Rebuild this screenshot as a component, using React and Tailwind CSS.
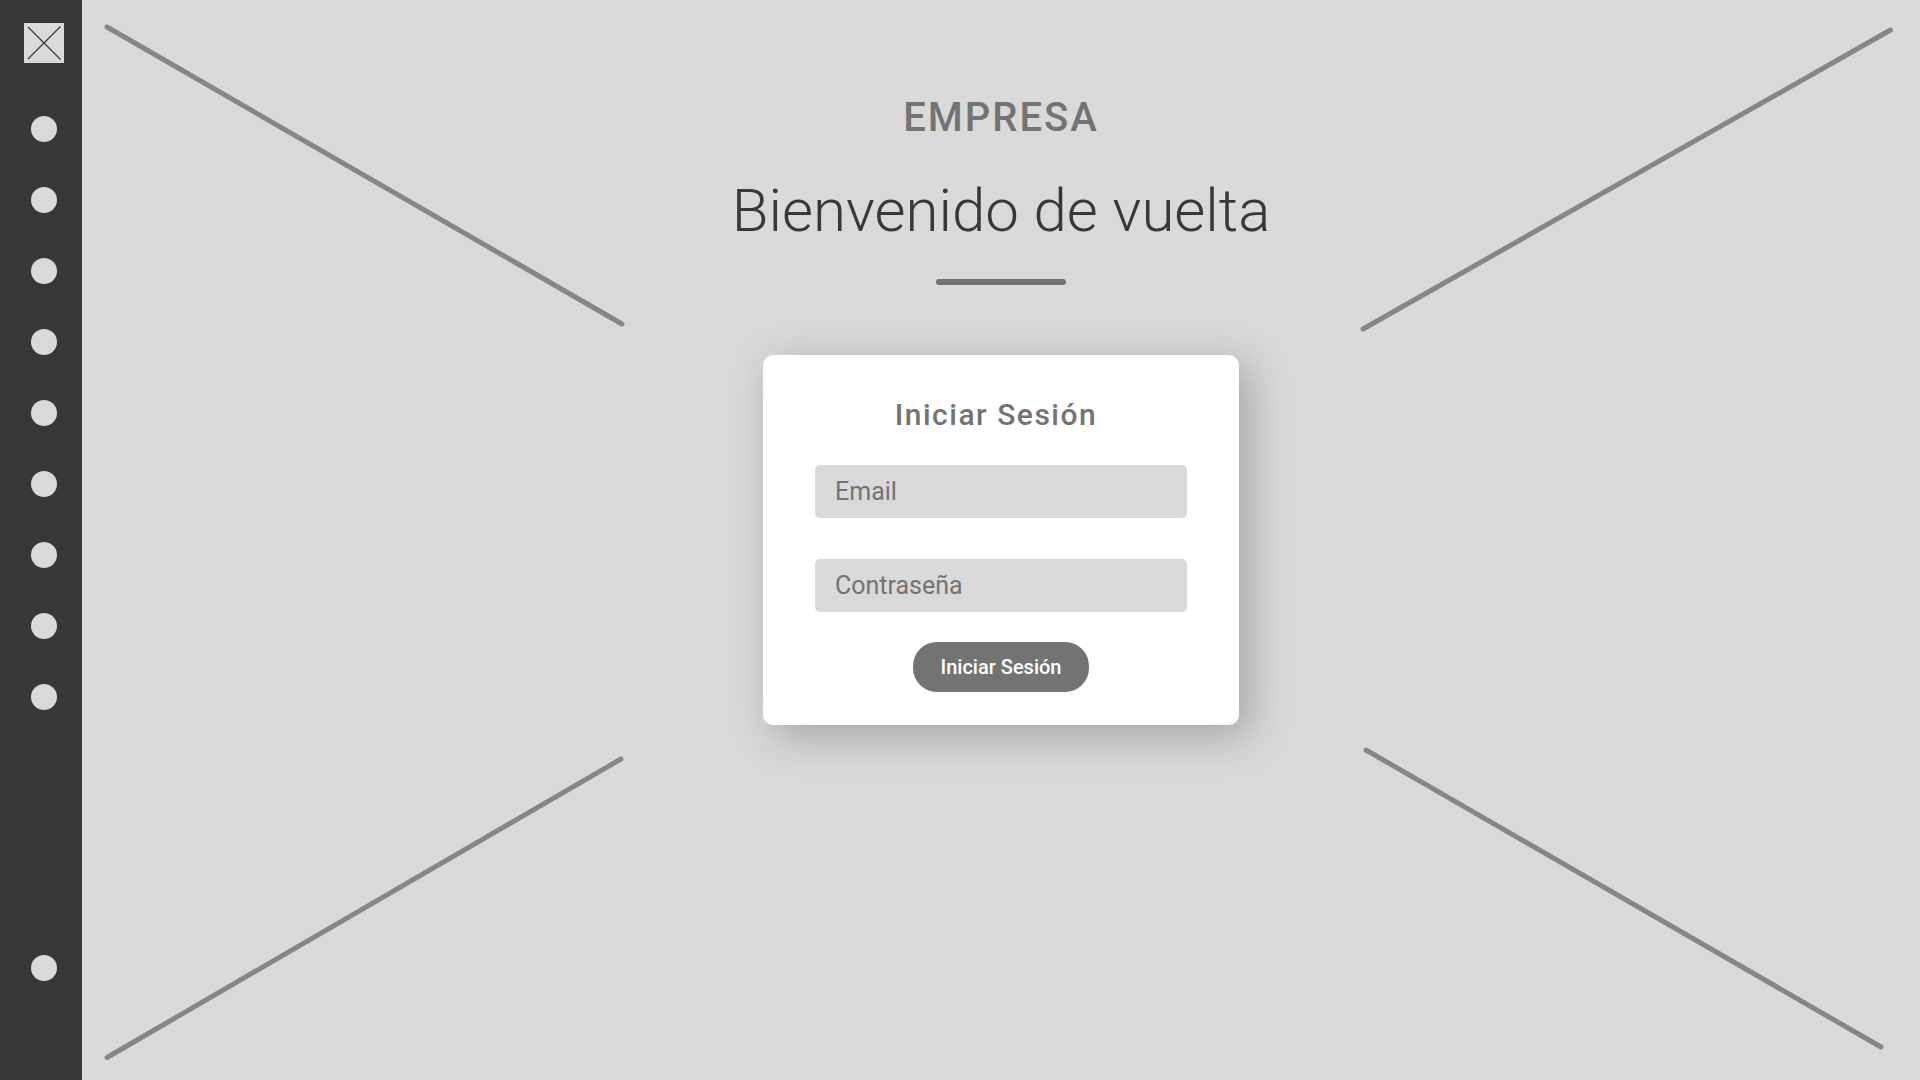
const navItems = [
  'Inicio',
  'Panel',
  'Clientes',
  'Proyectos',
  'Calendario',
  'Mensajes',
  'Informes',
  'Archivos',
  'Ajustes',
];

function NavDot({ label }) {
  return (
    <a href="#" aria-label={label} className="block size-[26px] rounded-full bg-[#d9d9d9]" />
  );
}

function Sidebar() {
  return (
    <aside className="flex w-[82px] shrink-0 flex-col items-center bg-[#383838] pt-[23px] pb-[99px] pl-[6px]">
      <a href="#" aria-label="Logo" className="block size-10 bg-[#d9d9d9]">
        <svg viewBox="0 0 40 40" className="size-10" fill="none" stroke="#383838" strokeWidth="1.200">
          <path d="M4 4 36.500 36.500M36.500 3.500 4 36" />
        </svg>
      </a>
      <nav className="mt-[53px] flex grow flex-col gap-[45px]">
        {navItems.map((label) => (
          <NavDot key={label} label={label} />
        ))}
        <div className="mt-auto">
          <NavDot label="Perfil" />
        </div>
      </nav>
    </aside>
  );
}

function Backdrop() {
  return (
    <svg
      aria-hidden="true"
      viewBox="0 0 1838 1080"
      preserveAspectRatio="none"
      className="absolute inset-0 h-full w-full"
      stroke="#868686"
      strokeWidth="5"
      strokeLinecap="round"
    >
      <path d="M25 27 540 324M1281 329 1808.500 30M25 1057.500 539 759M1284 750 1799 1047" />
    </svg>
  );
}

function Field({ label, type }) {
  return (
    <input
      type={type}
      aria-label={label}
      placeholder={label}
      className="h-[53px] w-full rounded-[5px] bg-[#d9d9d9] px-5 text-[25px] text-[#737373] outline-none placeholder:text-[#737373]"
    />
  );
}

function LoginCard() {
  return (
    <form
      onSubmit={(e) => e.preventDefault()}
      className="mt-[70px] flex w-[476px] flex-col items-center rounded-[10px] bg-white px-[52px] pt-10 pb-[33px] shadow-[10px_10px_40px_rgba(0,0,0,0.25)]"
    >
      <h2 className="pr-2.5 text-[30px] leading-10 font-medium tracking-wider text-[#737373]">
        Iniciar Sesión
      </h2>
      <div className="mt-[30px] flex w-full flex-col gap-[41px]">
        <Field label="Email" type="email" />
        <Field label="Contraseña" type="password" />
      </div>
      <button
        type="submit"
        className="mt-[30px] h-[50px] w-[176px] rounded-[24px] bg-[#737373] text-xl font-medium text-white"
      >
        Iniciar Sesión
      </button>
    </form>
  );
}

export default function App() {
  return (
    <div className="flex min-h-screen bg-[#d9d9d9] font-['Roboto',sans-serif]">
      <Sidebar />
      <main className="relative flex grow flex-col">
        <Backdrop />
        <div className="relative flex flex-col items-center pt-[93px]">
          <p className="text-[40px] leading-[50px] font-medium tracking-wider text-[#737373]">
            EMPRESA
          </p>
          <h1 className="mt-8 text-[60px] leading-[72px] font-light text-[#383838]">
            Bienvenido de vuelta
          </h1>
          <div className="mt-8 h-[6px] w-[130px] rounded-[3px] bg-[#737373]" />
          <LoginCard />
        </div>
      </main>
    </div>
  );
}
